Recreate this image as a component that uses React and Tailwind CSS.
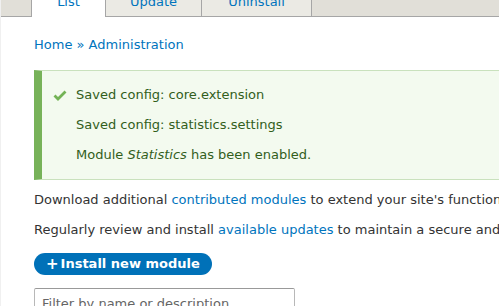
export default function App() {
  const tabs = [
    { label: 'List', active: true, w: 'w-[75px]' },
    { label: 'Update', w: 'w-[96px]' },
    { label: 'Uninstall', w: 'w-[110px]' },
  ]

  return (
    <div className="h-[306px] w-[499px] overflow-hidden border-l border-[#f0f0f0] bg-white font-['DejaVu_Sans',sans-serif] text-[13px] text-[#333]">
      <div className="-mt-[8px] flex h-[25px] border-b border-[#a6a6a6] bg-[#e1dfd8] pl-[30px]">
        {tabs.map((t) => (
          <div
            key={t.label}
            className={
              t.active
                ? `${t.w} -mb-px h-[25px] border-x border-[#a6a6a6] bg-white pt-[2px] text-center leading-[16px] text-[#0074bd]`
                : `${t.w} h-[24px] border-r border-[#a6a6a6] bg-[#ebeae4] pt-[2px] text-center leading-[16px] text-[#0074bd]`
            }
          >
            {t.label}
          </div>
        ))}
      </div>

      <div className="px-[33px]">
        <nav className="mt-[18px] leading-[20px]">
          <a href="#" className="text-[#0074bd]">Home</a>
          <span className="text-[#0074bd]"> » </span>
          <a href="#" className="text-[#0074bd]">Administration</a>
        </nav>

        <div className="mt-[15px] -mr-[40px] border border-l-[8px] border-[#c9e1bd] border-l-[#77b259] bg-[#f3faef] py-[14px] pl-[34px] text-[#325e1c]">
          <div className="flex flex-col gap-[10px] leading-[20px]">
            <div className="relative">
              <svg
                className="absolute -left-[23px] top-[5px]"
                width="14"
                height="11"
                viewBox="0 0 14 11"
              >
                <path d="M1.5 5.5 L5 9 L12.5 1.5" fill="none" stroke="#73b355" strokeWidth="2.8" />
              </svg>
              Saved config: core.extension
            </div>
            <div>Saved config: statistics.settings</div>
            <div>
              Module <em>Statistics</em> has been enabled.
            </div>
          </div>
        </div>

        <p className="mt-[5px] whitespace-nowrap leading-[30px]">
          Download additional{' '}
          <a href="#" className="text-[#0074bd]">contributed modules</a> to extend your
          site's functionality.
        </p>
        <p className="whitespace-nowrap leading-[30px]">
          Regularly review and install{' '}
          <a href="#" className="text-[#0074bd]">available updates</a> to maintain a secure
          and current site.
        </p>

        <button className="mt-[8px] flex h-[22px] items-center rounded-full bg-[#0071b8] px-[12px] text-[13px] font-bold text-white">
          <span className="mr-[2px] text-[15px]">+</span>Install new module
        </button>

        <input
          type="text"
          placeholder="Filter by name or description"
          className="mt-[13px] block h-[30px] w-[261px] rounded-[2px] border border-[#b8b8b8] border-t-[#999] px-[7px] text-[13px] placeholder:text-[#666]"
        />
      </div>
    </div>
  )
}
